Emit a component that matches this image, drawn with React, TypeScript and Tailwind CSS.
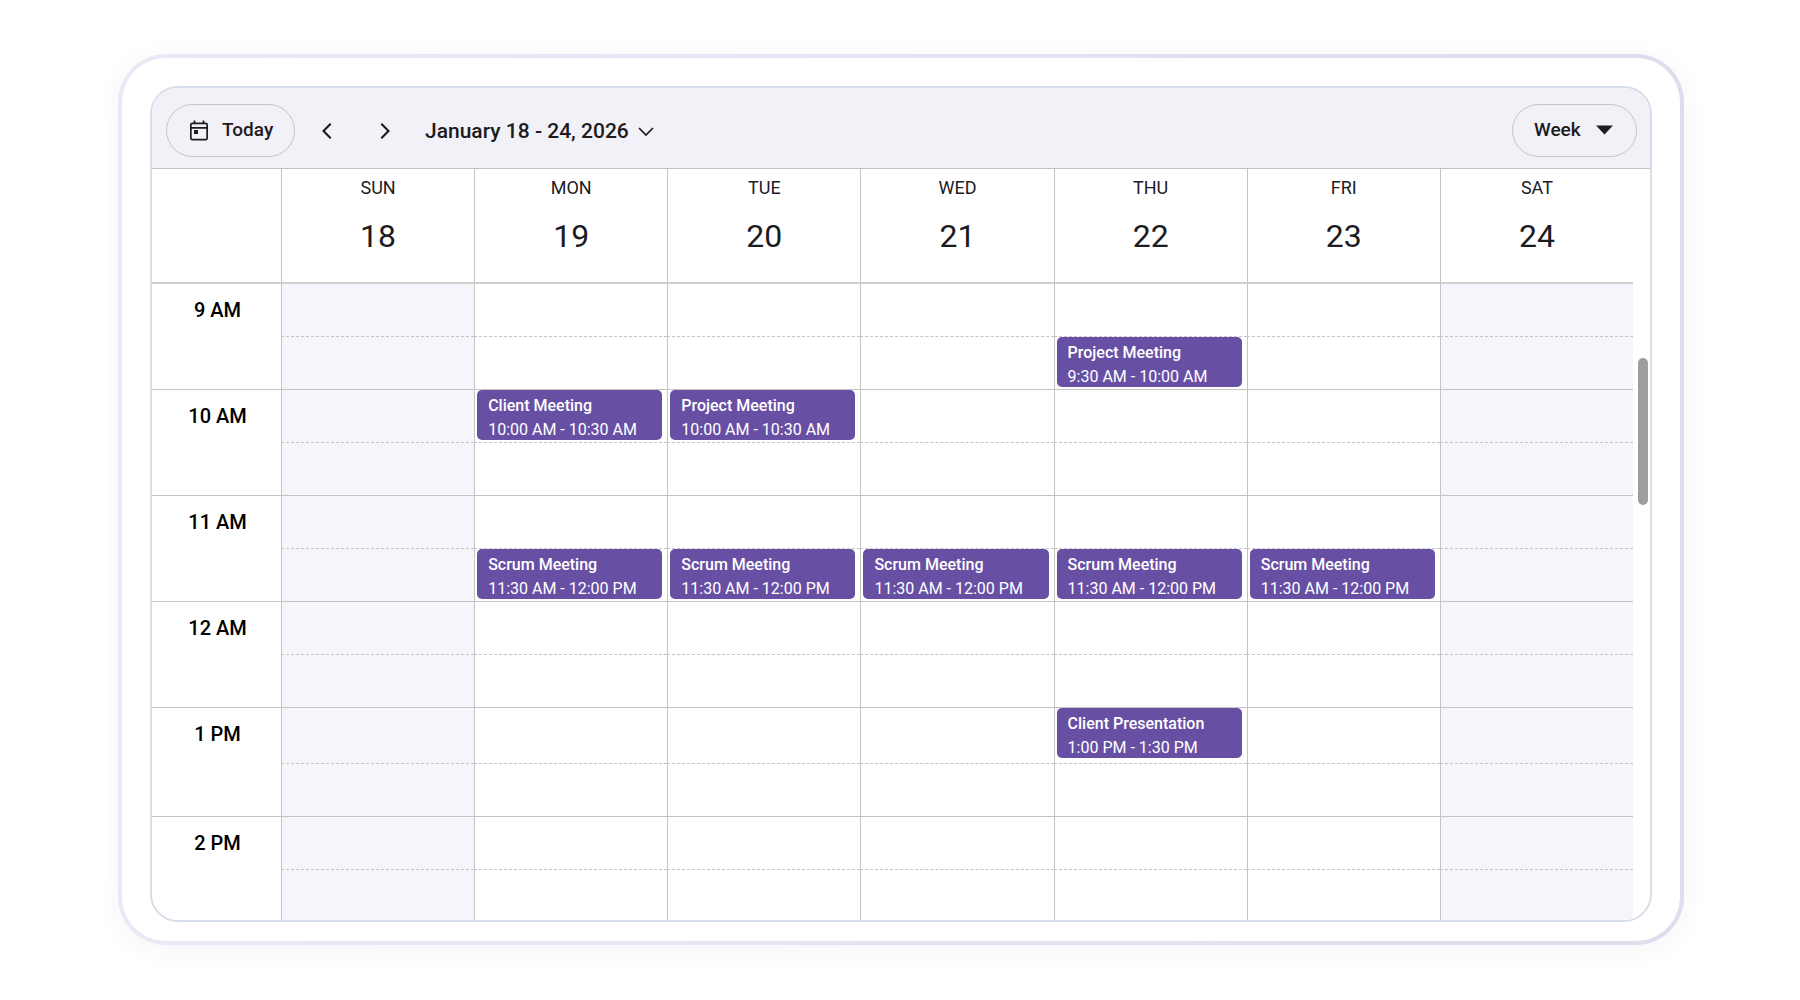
import { useState } from 'react';

interface CalendarEvent {
  title: string;
  time: string;
}

interface Day {
  name: string;
  date: number;
  weekend?: boolean;
}

const DAYS: Day[] = [
  { name: 'SUN', date: 18, weekend: true },
  { name: 'MON', date: 19 },
  { name: 'TUE', date: 20 },
  { name: 'WED', date: 21 },
  { name: 'THU', date: 22 },
  { name: 'FRI', date: 23 },
  { name: 'SAT', date: 24, weekend: true },
];

const HOURS = [
  { label: '9 AM', tall: false },
  { label: '10 AM', tall: false },
  { label: '11 AM', tall: false },
  { label: '12 AM', tall: false },
  { label: '1 PM', tall: true },
  { label: '2 PM', tall: false },
];

const scrum: CalendarEvent = { title: 'Scrum Meeting', time: '11:30 AM - 12:00 PM' };

// Keyed by `${slot}-${date}`, two slots per hour starting at 9 AM
const EVENTS: Record<string, CalendarEvent> = {
  '1-22': { title: 'Project Meeting', time: '9:30 AM - 10:00 AM' },
  '2-19': { title: 'Client Meeting', time: '10:00 AM - 10:30 AM' },
  '2-20': { title: 'Project Meeting', time: '10:00 AM - 10:30 AM' },
  '5-19': scrum,
  '5-20': scrum,
  '5-21': scrum,
  '5-22': scrum,
  '5-23': scrum,
  '8-22': { title: 'Client Presentation', time: '1:00 PM - 1:30 PM' },
};

export default function App() {
  return (
    <div className="bg-white pt-[54px] pr-[116px] pb-[55px] pl-[118px] font-[Roboto,sans-serif] text-[#1c1b1f]">
      <div className="rounded-[48px] bg-linear-to-r from-[#ebe9f6] to-[#dcdeed] p-1 shadow-[0_4px_26px_rgba(60,50,110,0.05)]">
        <div className="rounded-[44px] bg-white px-7 pt-7 pb-[19px]">
          <div className="overflow-hidden rounded-[28px] border-2 border-[#d7dee9] bg-white">
            <Toolbar />
            <div className="flex">
              <div className="min-w-0 flex-1">
                <WeekGrid />
              </div>
              <div className="w-[17px] shrink-0 pt-[189px] pl-[5px]">
                <div className="h-[147px] w-[10px] rounded-full bg-[#9e9e9e]" />
              </div>
            </div>
          </div>
        </div>
      </div>
    </div>
  );
}

function Toolbar() {
  const [view, setView] = useState('Week');

  return (
    <div className="flex h-[81px] items-center border-b border-[#c4c4c4] bg-[#f2f1f8] pt-[5px] pr-[13px] pl-[14px]">
      <button type="button" className="flex h-[53px] w-[129px] items-center gap-[13px] rounded-full border border-[#c4c4c4] pl-[22px] text-[19px] font-medium">
        <CalendarIcon />
        Today
      </button>
      <button type="button" aria-label="Previous week" className="ml-2 flex size-12 items-center justify-center">
        <svg width="10" height="16" viewBox="0 0 10 16" fill="none" stroke="currentColor" strokeWidth="2.1">
          <path d="M8.7 .8 1.5 8l7.2 7.2" />
        </svg>
      </button>
      <button type="button" aria-label="Next week" className="ml-[10px] flex size-12 items-center justify-center">
        <svg width="10" height="16" viewBox="0 0 10 16" fill="none" stroke="currentColor" strokeWidth="2.1">
          <path d="M1.3 .8 8.5 8l-7.2 7.2" />
        </svg>
      </button>
      <button type="button" className="ml-4 flex items-center gap-[9px] pt-[2px] text-[21px] font-medium">
        January 18 - 24, 2026
        <svg width="16" height="10" viewBox="0 0 16 10" fill="none" stroke="currentColor" strokeWidth="1.7">
          <path d="m1 1 7 7 7-7" />
        </svg>
      </button>
      <div className="relative ml-auto">
        <select
          aria-label="Calendar view"
          value={view}
          onChange={(e) => setView(e.target.value)}
          className="block h-[53px] w-[125px] appearance-none rounded-full border border-[#c4c4c4] pl-[21px] text-[19px] font-medium"
        >
          <option>Day</option>
          <option>Week</option>
          <option>Month</option>
        </select>
        <svg className="pointer-events-none absolute top-[21px] right-6" width="17" height="10" viewBox="0 0 17 10" fill="currentColor">
          <path d="M0 .5h17L8.5 9.5z" />
        </svg>
      </div>
    </div>
  );
}

function WeekGrid() {
  return (
    <table className="w-full table-fixed border-separate border-spacing-0">
      <colgroup>
        <col className="w-[129px]" />
        {DAYS.map((day) => (
          <col key={day.date} />
        ))}
      </colgroup>
      <thead>
        <tr className="h-[115px]">
          <td className="border-b-2 border-[#cfcfcf]" />
          {DAYS.map((day) => (
            <th key={day.date} scope="col" className="border-b-2 border-l border-b-[#cfcfcf] border-l-[#c4c4c4] p-0 pt-[7px] align-top font-normal">
              <div className="text-[18px] leading-6">{day.name}</div>
              <div className="mt-[15px] text-[32px] leading-[42px]">{day.date}</div>
            </th>
          ))}
        </tr>
      </thead>
      <tbody>
        {HOURS.map((hour, i) => (
          <HourRows key={hour.label} label={hour.label} index={i} tall={hour.tall} last={i === HOURS.length - 1} />
        ))}
      </tbody>
    </table>
  );
}

interface HourRowsProps {
  label: string;
  index: number;
  tall: boolean;
  last: boolean;
}

function HourRows({ label, index, tall, last }: HourRowsProps) {
  return (
    <>
      <tr className={tall ? 'h-[56px]' : 'h-[53px]'}>
        <th
          scope="row"
          rowSpan={2}
          className={`p-0 pt-[14px] pl-[2px] align-top text-[20px] leading-6 font-medium text-black ${last ? '' : 'border-b border-[#c4c4c4]'}`}
        >
          {label}
        </th>
        {DAYS.map((day) => (
          <Slot key={day.date} day={day} event={EVENTS[`${index * 2}-${day.date}`]} line="border-b border-b-[#c4c4c4] [border-bottom-style:dashed]" />
        ))}
      </tr>
      <tr className={last ? 'h-[50px]' : 'h-[53px]'}>
        {DAYS.map((day) => (
          <Slot key={day.date} day={day} event={EVENTS[`${index * 2 + 1}-${day.date}`]} line={last ? '' : 'border-b border-b-[#c4c4c4]'} />
        ))}
      </tr>
    </>
  );
}

function Slot({ day, event, line }: { day: Day; event?: CalendarEvent; line: string }) {
  return (
    <td className={`border-l border-l-[#c4c4c4] p-0 align-top ${line} ${day.weekend ? 'bg-[#f6f5fb]' : ''}`}>
      {event && (
        <div className="mr-[5px] ml-[2px] h-[50px] overflow-hidden rounded-[5px] bg-[#6750a4] pt-1 pl-[11px] text-[16px] leading-6 whitespace-nowrap text-white">
          <div className="font-medium">{event.title}</div>
          <div>{event.time}</div>
        </div>
      )}
    </td>
  );
}

function CalendarIcon() {
  return (
    <svg width="20" height="21" viewBox="0 0 20 21" fill="none" stroke="currentColor" strokeWidth="1.7">
      <rect x="1.85" y="3.35" width="16.3" height="16.3" rx="1.5" />
      <path d="M2 7.8h16M5.5 0.5v3M14.5 0.5v3" />
      <rect x="5" y="10" width="4" height="4" fill="currentColor" stroke="none" />
    </svg>
  );
}
